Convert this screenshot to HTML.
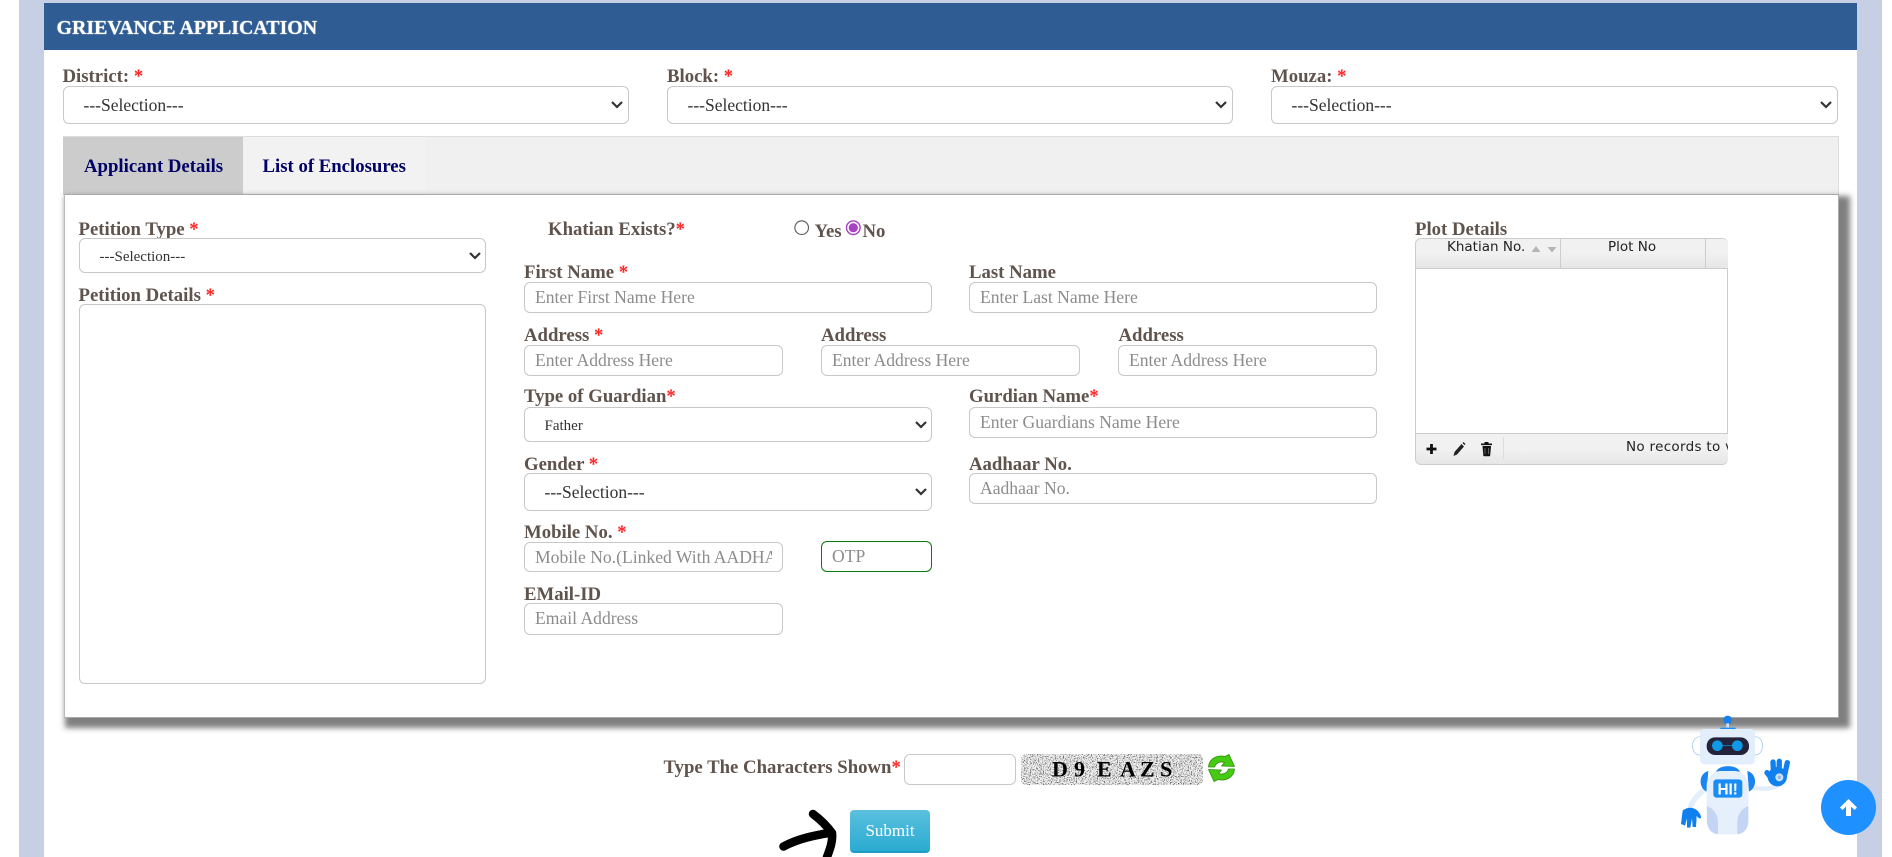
<!DOCTYPE html>
<html lang="en"><head><meta charset="utf-8"><title>Grievance Application</title>
<style>
html,body{margin:0;padding:0;background:#fff}
#p{position:relative;width:1892px;height:857px;overflow:hidden;background:#fff;font-family:"Liberation Serif",serif;filter:blur(.35px)}
#p>*{position:absolute;box-sizing:border-box}
.l{font-size:18.75px;line-height:22px;font-weight:bold;color:#5f534c;white-space:nowrap}
.l b{color:#f22;font-weight:bold}
input,select,textarea{font-family:"Liberation Serif",serif;background:#fff;border:1.5px solid #c8c8c8;border-radius:6px;margin:0;outline:none;color:#333}
input{font-size:17.6px;padding:0 10px}
input::placeholder{color:#8c8c8c;opacity:1}
select{appearance:none;-webkit-appearance:none;font-size:17.5px;color:#333;padding:0 0 0 19.5px}
select.s{font-size:15px;padding-left:19.5px}
.c{width:14px;height:10px}
.gh{font-family:"DejaVu Sans",sans-serif;font-size:13.5px;color:#222;white-space:nowrap;line-height:16px}
</style></head><body>
<div id="p">
<div style="left:19px;top:0;width:1863px;height:857px;background:#c6cfe4"></div>
<div style="left:44px;top:3px;width:1813px;height:854px;background:#fff"></div>
<div style="left:44px;top:3px;width:1813px;height:47px;background:#2e5c93;color:#fff;font-size:19.9px;font-weight:bold;line-height:50px;padding-left:12.5px;text-shadow:0 0 1px #fff">GRIEVANCE APPLICATION</div>

<div class="l" style="left:62.5px;top:66.3px">District: <b>*</b></div>
<select style="left:63px;top:86px;width:566px;height:38px"><option>---Selection---</option></select>
<svg class="c" style="left:610px;top:100px" viewBox="0 0 14 10"><path d="M2 2l5 5 5-5" fill="none" stroke="#333" stroke-width="2.2"/></svg>
<div class="l" style="left:667px;top:66.3px">Block: <b>*</b></div>
<select style="left:667px;top:86px;width:566px;height:38px"><option>---Selection---</option></select>
<svg class="c" style="left:1214px;top:100px" viewBox="0 0 14 10"><path d="M2 2l5 5 5-5" fill="none" stroke="#333" stroke-width="2.2"/></svg>
<div class="l" style="left:1271px;top:66.3px">Mouza: <b>*</b></div>
<select style="left:1271px;top:86px;width:567px;height:38px"><option>---Selection---</option></select>
<svg class="c" style="left:1819px;top:100px" viewBox="0 0 14 10"><path d="M2 2l5 5 5-5" fill="none" stroke="#333" stroke-width="2.2"/></svg>

<div style="left:63px;top:136px;width:1776px;height:59px;background:#f0f0f0;border-top:1px solid #ddd;border-right:1px solid #ddd"></div>
<div style="left:63px;top:137px;width:179.5px;height:58px;background:#ccc"></div>
<div style="left:242.5px;top:137px;width:183.5px;height:58px;background:#f2f2f2"></div>
<div class="l" style="left:84px;top:155.5px;color:#006">Applicant Details</div>
<div class="l" style="left:262.5px;top:155.5px;color:#006">List of Enclosures</div>

<div style="left:65px;top:196px;width:1785px;height:532px;background:#7f7f7f;filter:blur(3px)"></div>
<div style="left:63.5px;top:194px;width:1775px;height:523.5px;background:#fff;border:1px solid #aaa;border-left-color:#bbb"></div>

<div class="l" style="left:78.5px;top:219px">Petition Type <b>*</b></div>
<select class="s" style="left:79px;top:238px;width:407px;height:35px;padding-top:2px"><option>---Selection---</option></select>
<svg class="c" style="left:468px;top:251px" viewBox="0 0 14 10"><path d="M2 2l5 5 5-5" fill="none" stroke="#333" stroke-width="2.2"/></svg>
<div class="l" style="left:78.5px;top:285px">Petition Details <b>*</b></div>
<textarea style="left:79px;top:304px;width:407px;height:380px;resize:none"></textarea>

<div class="l" style="left:548px;top:219px">Khatian Exists?<b>*</b></div>
<svg style="left:792px;top:218px;width:70px;height:20px" viewBox="0 0 70 20">
<circle cx="9.7" cy="9.7" r="6.8" fill="#fff" stroke="#666" stroke-width="1.2"/>
<circle cx="61.3" cy="9.7" r="6.8" fill="#fff" stroke="#a742c0" stroke-width="1.4"/>
<circle cx="61.3" cy="9.7" r="4.6" fill="#a742c0"/></svg>
<div class="l" style="left:814.500px;top:220.500px">Yes</div>
<div class="l" style="left:862.5px;top:220.500px">No</div>

<div class="l" style="left:524px;top:262.2px">First Name <b>*</b></div>
<input style="left:524px;top:282px;width:408px;height:31px" placeholder="Enter First Name Here">
<div class="l" style="left:969px;top:262.2px">Last Name</div>
<input style="left:969px;top:282px;width:408px;height:31px" placeholder="Enter Last Name Here">

<div class="l" style="left:524px;top:325px">Address <b>*</b></div>
<input style="left:524px;top:345px;width:259px;height:31px" placeholder="Enter Address Here">
<div class="l" style="left:821px;top:325px">Address</div>
<input style="left:821px;top:345px;width:259px;height:31px" placeholder="Enter Address Here">
<div class="l" style="left:1118.500px;top:325px">Address</div>
<input style="left:1118px;top:345px;width:259px;height:31px" placeholder="Enter Address Here">

<div class="l" style="left:524px;top:386.3px">Type of Guardian<b>*</b></div>
<select class="s" style="left:524px;top:407px;width:408px;height:35px;padding-top:3px"><option>Father</option></select>
<svg class="c" style="left:914px;top:420px" viewBox="0 0 14 10"><path d="M2 2l5 5 5-5" fill="none" stroke="#333" stroke-width="2.2"/></svg>
<div class="l" style="left:969px;top:386.3px">Gurdian Name<b>*</b></div>
<input style="left:969px;top:407px;width:408px;height:31px" placeholder="Enter Guardians Name Here">

<div class="l" style="left:524px;top:454.2px">Gender <b>*</b></div>
<select style="left:524px;top:473px;width:408px;height:38px"><option>---Selection---</option></select>
<svg class="c" style="left:914px;top:487px" viewBox="0 0 14 10"><path d="M2 2l5 5 5-5" fill="none" stroke="#333" stroke-width="2.2"/></svg>
<div class="l" style="left:969px;top:454.2px">Aadhaar No.</div>
<input style="left:969px;top:473px;width:408px;height:31px" placeholder="Aadhaar No.">

<div class="l" style="left:524px;top:522.2px">Mobile No. <b>*</b></div>
<input style="left:524px;top:542px;width:259px;height:30px" placeholder="Mobile No.(Linked With AADHAAR)">
<input style="left:821px;top:541px;width:111px;height:31px;border-color:#0a7a0a" placeholder="OTP">
<div class="l" style="left:524px;top:584.2px">EMail-ID</div>
<input style="left:524px;top:603px;width:259px;height:32px;padding-bottom:2px" placeholder="Email Address">

<!-- grid -->
<div class="l" style="left:1415px;top:219px">Plot Details</div>
<div style="left:1415px;top:238px;width:313px;height:227px;border:1px solid #ccc;border-right:none;border-radius:6px;overflow:hidden;background:#fff">
 <div style="position:absolute;left:0;top:0;width:100%;height:28.500px;background:linear-gradient(#f1f1f1 50%,#e6e6e6);border-bottom:1px solid #ccc"></div>
 <div style="position:absolute;left:144px;top:0;width:1px;height:29px;background:#ccc"></div>
 <div style="position:absolute;left:289px;top:0;width:1px;height:29px;background:#ccc"></div>
 <div style="position:absolute;left:310.5px;top:29px;width:1px;height:166px;background:#ccc"></div>
 <div style="position:absolute;left:0;top:194px;width:100%;height:32px;background:linear-gradient(#f1f1f1 50%,#e6e6e6);border-top:1px solid #ccc;border-bottom:1px solid #ccc;box-sizing:border-box"></div>
 <div style="position:absolute;left:87px;top:198px;width:1px;height:22px;background:#ddd"></div>
 <div class="gh" style="position:absolute;left:31px;top:0">Khatian No.</div>
 <div class="gh" style="position:absolute;left:192px;top:0">Plot No</div>
 <svg style="position:absolute;left:115px;top:5px;width:30px;height:10px" viewBox="0 0 30 10"><path d="M.5 8l4.500-6 4.500 6z" fill="#b5b5b5"/><path d="M16.500 3h9l-4.500 5.500z" fill="#b5b5b5"/></svg>
 <div class="gh" style="position:absolute;left:210px;top:200px;letter-spacing:.3px">No records to view</div>
 <svg style="position:absolute;left:8px;top:199px;width:76px;height:22px" viewBox="0 0 76 22">
 <path d="M7.500 6v10M2.500 11h10" stroke="#111" stroke-width="2.800" fill="none"/>
 <path d="M29.500 18l1-4 7-8 2.500 2.500-7 8zM38.500 5l1-1 2 2-1 1z" fill="#222"/>
 <path d="M58.500 8h8.500l-.8 9.500q0 .8-.9.800h-5q-.9 0-1-.8zM57 5.500h11v1.600h-11zM60.500 4h4v1.500h-4z" fill="#111"/>
 <path d="M61 10v6M64.500 10v6" stroke="#888" stroke-width=".7"/>
 </svg>
</div>

<!-- captcha -->
<div class="l" style="left:663.500px;top:756.700px">Type The Characters Shown<b>*</b></div>
<input style="left:904px;top:754px;width:112px;height:31px">
<svg style="left:1021px;top:754px;width:182px;height:31px" viewBox="0 0 182 31">
<defs><filter id="n" x="0" y="0" width="100%" height="100%"><feTurbulence type="fractalNoise" baseFrequency=".85" numOctaves="2" seed="7"/><feColorMatrix values="0 0 0 0 .1 0 0 0 0 .1 0 0 0 0 .1 3.6 3.6 0 0 -3.6"/></filter><clipPath id="cr"><rect width="182" height="31" rx="5"/></clipPath></defs>
<g clip-path="url(#cr)"><rect width="182" height="31" fill="#f0f0f0"/><rect width="182" height="31" filter="url(#n)"/></g>
<text x="31 53 76 99 119 139" y="22.7" font-family="Liberation Serif,serif" font-size="22px" font-weight="bold" fill="#000">D9EAZS</text>
</svg>
<svg style="left:1208px;top:754px;width:27px;height:28px" viewBox="0 0 27 28">
<path d="M.5 13C1 5 9 .5 17 2.500L21 .5l5.500 12L13.500 12l3-3.500C12.500 7 8 8.500 6.500 13z" fill="#45cc12" stroke="#2b8f0c" stroke-width=".8" stroke-linejoin="round"/>
<path d="M26.500 15C26 23 18 27.500 10 25.500L6 27.500.5 15.500l13 .5-3 3.500C14.500 21 19 19.500 20.500 15z" fill="#45cc12" stroke="#2b8f0c" stroke-width=".8" stroke-linejoin="round"/>
</svg>

<div style="left:850px;top:810px;width:80px;height:43px;border-radius:4px;background:linear-gradient(#5bc0de,#2aabd2);border-bottom:2px solid #1f9cc4;color:#fff;font-size:17px;text-align:center;line-height:41px">Submit</div>
<svg style="left:775px;top:805px;width:70px;height:52px" viewBox="0 0 70 52">
<path d="M8.500 41.500C24 33 42 30 56 27.500M38 9c8 6 14 12 19 19 1 8-2 16-5 24" fill="none" stroke="#000" stroke-width="8.500" stroke-linecap="round" stroke-linejoin="round"/>
</svg>

<!-- robot -->
<svg style="left:1640px;top:700px;width:252px;height:157px" viewBox="0 0 756 471">
<path d="M195 268C165 290 152 310 148 335" fill="none" stroke="#e3eefc" stroke-width="16"/>
<path d="M335 262c25 5 55 8 85-8" fill="none" stroke="#e3eefc" stroke-width="13"/>
<circle cx="263" cy="60" r="13" fill="#1680ee"/><rect x="259" y="70" width="8" height="15" fill="#cfe0f5"/><rect x="241" y="83" width="46" height="6" rx="2" fill="#1a8cf5"/>
<path d="M180 110c-30 0-30 55 0 55M345 110c30 0 30 55 0 55" fill="#fff" stroke="#8fc2f5" stroke-width="2"/>
<rect x="180" y="87" width="165" height="106" rx="14" fill="#e3eefc"/>
<rect x="200" y="112" width="127" height="53" rx="25" fill="#23233c"/>
<circle cx="232" cy="137" r="16" fill="#0f9ae8"/><circle cx="292" cy="137" r="16" fill="#0f9ae8"/>
<path d="M248 137h28" stroke="#0f9ae8" stroke-width="2"/>
<path d="M228 215c10-22 62-22 72 0z" fill="#1a84f0"/>
<path d="M205 213c-30 8-30 50-5 62zM322 213c30 8 30 50 5 62z" fill="#1a84f0"/>
<rect x="200" y="213" width="125" height="190" rx="42" fill="#e6f0fd"/>
<path d="M201 318c20 8 33 25 33 50v35c-20-2-33-18-33-40zM325 318c-20 8-33 25-33 50v35c20-2 33-18 33-40z" fill="#c3d4f4"/>
<rect x="220" y="238" width="87" height="55" rx="10" fill="#1a8cf5"/>
<text x="263" y="283" text-anchor="middle" font-family="Liberation Sans,sans-serif" font-size="46px" font-weight="bold" fill="#fff">HI!</text>
<path d="M123 372l5-40c15-14 40-12 52 10 6 12 2 16-4 12l-6-6-2 33h-10l-2-26-5 28h-10l0-28-6 22z" fill="#1080ee"/>
<g fill="none" stroke="#1080ee" stroke-width="16" stroke-linecap="round"><path d="M399 186l2 40M418 184l-1 38M442 188l-8 36M381 218l16 20"/></g>
<circle cx="412" cy="230" r="29" fill="#1080ee"/>
<circle cx="418" cy="232" r="12" fill="#cfe0f7"/><circle cx="418" cy="232" r="5" fill="#8fb8ee"/>
</svg>

<div style="left:1821px;top:780px;width:55px;height:55px;border-radius:50%;background:#1e90ff"></div>
<svg style="left:1838px;top:797px;width:21px;height:21px" viewBox="0 0 21 21"><path d="M10.500 2L19 10.500l-2.500 2.500-3.500-3.500V19H8V9.500L4.500 13 2 10.500z" fill="#fff"/></svg>
</div>
</body></html>
